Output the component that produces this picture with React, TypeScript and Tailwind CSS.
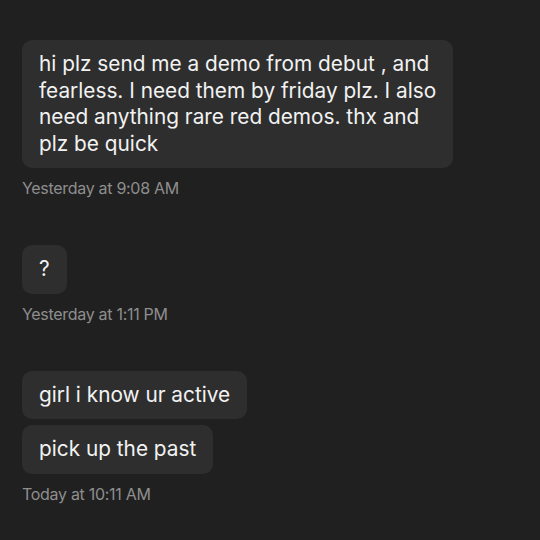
const messages = [
  {
    bubbles: [
      ["hi plz send me a demo from debut , and", "fearless. I need them by friday plz. I also", "need anything rare red demos. thx and", "plz be quick"],
    ],
    time: "Yesterday at 9:08 AM",
  },
  { bubbles: [["?"]], time: "Yesterday at 1:11 PM" },
  { bubbles: [["girl i know ur active"], ["pick up the past"]], time: "Today at 10:11 AM" },
];

export default function App() {
  return (
    <div
      className="w-[540px] h-[540px] bg-[#202020] overflow-hidden pl-[22px] pt-[40px]"
      style={{ fontFamily: "Inter, 'Noto Sans', sans-serif" }}
    >
      <div className="flex flex-col gap-[47px]">
        {messages.map((m, i) => (
          <div key={i} className="flex flex-col items-start">
            <div className="flex flex-col items-start gap-[6px]">
              {m.bubbles.map((lines, j) => (
                <div
                  key={j}
                  className="bg-[#2e2e2e] rounded-[10px] px-[17px] py-[11px] text-[20.8px] leading-[26.5px] text-[#f2f2f2]"
                >
                  {lines.map((l, k) => (
                    <div key={k}>{l}</div>
                  ))}
                </div>
              ))}
            </div>
            <div className="mt-[10px] text-[16px] leading-[20px] text-[#8e8e8e] tracking-[-0.3px]">
              {m.time}
            </div>
          </div>
        ))}
      </div>
    </div>
  );
}
